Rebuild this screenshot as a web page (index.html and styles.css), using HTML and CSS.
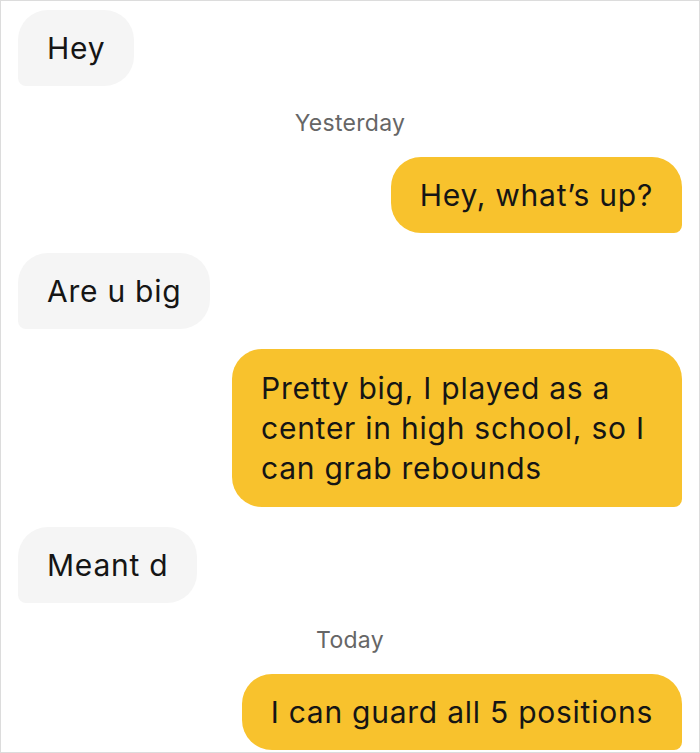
FILE: index.html
```html
<!DOCTYPE html>
<html lang="en">
<head>
    <meta charset="UTF-8">
    <meta name="viewport" content="width=device-width, initial-scale=1.0">
    <title>Chat</title>
    <link rel="stylesheet" href="styles.css">
</head>
<body>
    <div class="chat">
        <div class="msg them">Hey</div>
        <div class="stamp">Yesterday</div>
        <div class="msg me">Hey, what’s up?</div>
        <div class="msg them">Are u big</div>
        <div class="msg me long">Pretty big, I played as a center in high school, so I can grab rebounds</div>
        <div class="msg them">Meant d</div>
        <div class="stamp">Today</div>
        <div class="msg me">I can guard all 5 positions</div>
    </div>
</body>
</html>
```

FILE: styles.css
```css
body {
    margin: 0;
    padding: 0;
    background-color: #fff;
    font-family: Inter, "Open Sans", sans-serif;
}
.chat {
    box-sizing: border-box;
    width: 700px;
    height: 753px;
    overflow: hidden;
    border: 1px solid #dcdcdc;
    padding: 9px 17px 0;
    display: flex;
    flex-direction: column;
    gap: 20px;
}
.msg {
    max-width: 392px;
    padding: 18px 29px;
    font-size: 30px;
    letter-spacing: 0.75px;
    line-height: 40px;
    color: #151515;
}
.msg.long {
    padding: 19px 29px;
}
.them {
    align-self: flex-start;
    background-color: #f5f5f5;
    border-radius: 30px 30px 30px 8px;
}
.me {
    align-self: flex-end;
    background-color: #f8c22d;
    border-radius: 30px 30px 8px 30px;
}
.stamp {
    align-self: center;
    height: 31px;
    line-height: 35px;
    font-size: 23px;
    letter-spacing: 0.3px;
    color: #666;
}
```
